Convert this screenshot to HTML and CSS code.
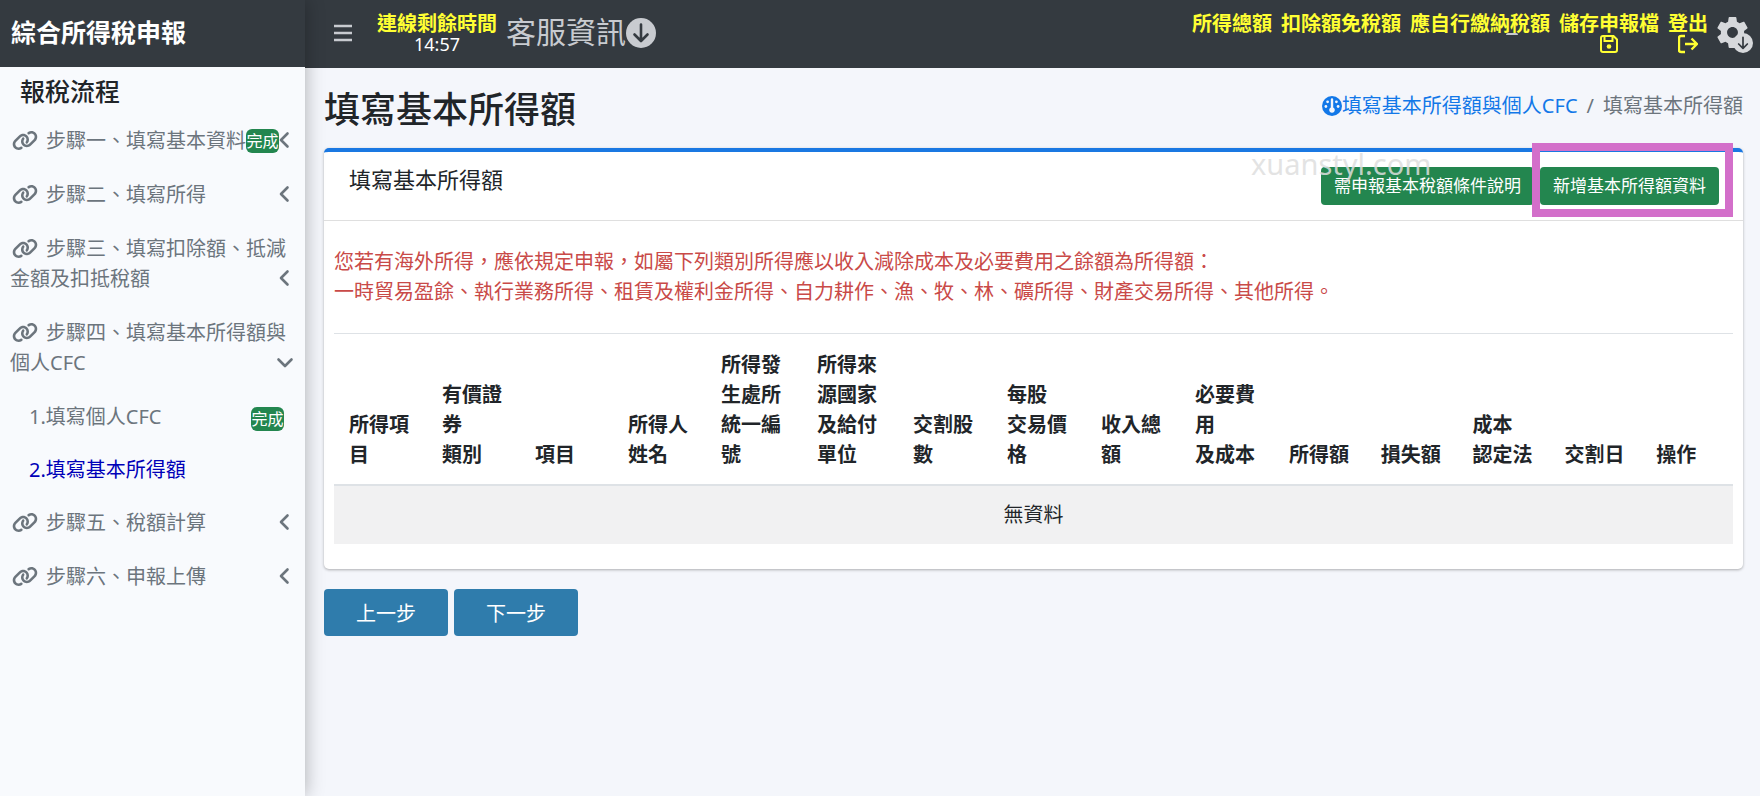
FILE: index.html
```html
<!DOCTYPE html>
<html lang="zh-Hant">
<head>
  <meta charset="UTF-8">
  <meta name="viewport" content="width=device-width, initial-scale=1.0">
  <title>綜合所得稅申報</title>
  <link rel="stylesheet" href="styles.css">
</head>
<body>
  <svg class="sprite" aria-hidden="true">
    <symbol id="i-link" viewBox="0 0 640 512">
      <path d="M579.8 267.7c56.5-56.5 56.5-148 0-204.5c-50-50-128.8-56.5-186.3-15.4l-1.6 1.1c-14.4 10.3-17.7 30.3-7.4 44.6s30.3 17.7 44.6 7.4l1.6-1.1c32.1-22.9 76-19.3 103.8 8.6c31.5 31.5 31.5 82.5 0 114L422.3 334.8c-31.5 31.5-82.5 31.5-114 0c-27.9-27.9-31.5-71.8-8.6-103.8l1.1-1.6c10.3-14.4 6.9-34.4-7.4-44.6s-34.4-6.9-44.6 7.4l-1.1 1.6C206.5 251.2 213 330 263 380c56.5 56.5 148 56.5 204.5 0L579.8 267.7zM60.2 244.3c-56.5 56.5-56.5 148 0 204.5c50 50 128.8 56.5 186.3 15.4l1.6-1.1c14.4-10.3 17.7-30.3 7.4-44.6s-30.3-17.7-44.6-7.4l-1.6 1.1c-32.1 22.9-76 19.3-103.8-8.6C74 372 74 321 105.5 289.5L217.7 177.2c31.5-31.5 82.5-31.5 114 0c27.9 27.9 31.5 71.8 8.6 103.9l-1.1 1.6c-10.3 14.4-6.9 34.4 7.4 44.6s34.4 6.9 44.6-7.4l1.1-1.6C433.5 260.8 427 182 377 132c-56.5-56.5-148-56.5-204.5 0L60.2 244.3z"/>
    </symbol>
    <symbol id="i-left" viewBox="0 0 12 18">
      <path d="M9.5 2.5L3 9l6.5 6.5" fill="none" stroke="currentColor" stroke-width="2.6" stroke-linecap="round" stroke-linejoin="round"/>
    </symbol>
    <symbol id="i-down" viewBox="0 0 18 12">
      <path d="M2.5 2.5L9 9l6.5-6.5" fill="none" stroke="currentColor" stroke-width="2.6" stroke-linecap="round" stroke-linejoin="round"/>
    </symbol>
    <symbol id="i-circle-down" viewBox="0 0 30 30">
      <circle cx="15" cy="15" r="15"/>
      <path d="M15 6.5v16M8.5 16.5l6.5 6.5 6.5-6.5" fill="none" stroke="#343a40" stroke-width="2.6" stroke-linecap="round" stroke-linejoin="round"/>
    </symbol>
    <symbol id="i-gear" viewBox="2 2 20 20">
      <path d="M19.43 12.98c.04-.32.07-.64.07-.98s-.03-.66-.07-.98l2.11-1.65c.19-.15.24-.42.12-.64l-2-3.46c-.12-.22-.39-.3-.61-.22l-2.49 1c-.52-.4-1.08-.73-1.69-.98l-.38-2.65C14.46 2.18 14.25 2 14 2h-4c-.25 0-.46.18-.49.42l-.38 2.65c-.61.25-1.17.59-1.69.98l-2.49-1c-.23-.09-.49 0-.61.22l-2 3.46c-.13.22-.07.49.12.64l2.11 1.65c-.04.32-.07.65-.07.98s.03.66.07.98l-2.11 1.65c-.19.15-.24.42-.12.64l2 3.46c.12.22.39.3.61.22l2.49-1c.52.4 1.08.73 1.69.98l.38 2.65c.03.24.24.42.49.42h4c.25 0 .46-.18.49-.42l.38-2.65c.61-.25 1.17-.59 1.69-.98l2.49 1c.23.09.49 0 .61-.22l2-3.46c.12-.22.07-.49-.12-.64l-2.11-1.65zM12 15.5c-1.93 0-3.5-1.57-3.5-3.5s1.57-3.5 3.5-3.5 3.5 1.57 3.5 3.5-1.57 3.5-3.5 3.5z"/>
    </symbol>
    <symbol id="i-gauge" viewBox="0 0 20 20">
      <circle cx="10" cy="10" r="10"/>
      <g fill="#f4f6fb">
        <path d="M8.8 3.4a1.2 1.2 0 0 1 2.4 0v8a2.8 2.8 0 1 1-2.4 0z"/>
        <circle cx="5.6" cy="5.8" r="1.4"/>
        <circle cx="14.4" cy="5.8" r="1.4"/>
        <circle cx="3.900" cy="10.500" r="1.400"/>
        <circle cx="16.100" cy="10.500" r="1.400"/>
      </g>
    </symbol>
  </svg>

  <div class="wrapper">
    <aside class="sidebar">
      <a class="brand" href="#">綜合所得稅申報</a>
      <h2 class="sidebar-title">報稅流程</h2>
      <nav>
        <ul class="menu">
          <li>
            <a class="menu-link" href="#"><svg class="link-icon"><use href="#i-link"/></svg>步驟一、填寫基本資料<span class="badge">完成</span><svg class="arrow"><use href="#i-left"/></svg></a>
          </li>
          <li>
            <a class="menu-link" href="#"><svg class="link-icon"><use href="#i-link"/></svg>步驟二、填寫所得<svg class="arrow"><use href="#i-left"/></svg></a>
          </li>
          <li>
            <a class="menu-link" href="#"><svg class="link-icon"><use href="#i-link"/></svg>步驟三、填寫扣除額、抵減金額及扣抵稅額<svg class="arrow"><use href="#i-left"/></svg></a>
          </li>
          <li>
            <a class="menu-link" href="#"><svg class="link-icon"><use href="#i-link"/></svg>步驟四、填寫基本所得額與個人CFC<svg class="arrow open"><use href="#i-down"/></svg></a>
            <ul class="submenu">
              <li><a class="submenu-link" href="#">1.填寫個人CFC<span class="badge">完成</span></a></li>
              <li><a class="submenu-link active" href="#">2.填寫基本所得額</a></li>
            </ul>
          </li>
          <li>
            <a class="menu-link" href="#"><svg class="link-icon"><use href="#i-link"/></svg>步驟五、稅額計算<svg class="arrow"><use href="#i-left"/></svg></a>
          </li>
          <li>
            <a class="menu-link" href="#"><svg class="link-icon"><use href="#i-link"/></svg>步驟六、申報上傳<svg class="arrow"><use href="#i-left"/></svg></a>
          </li>
        </ul>
      </nav>
    </aside>

    <div class="main">
      <header class="navbar">
        <button class="toggle" type="button" aria-label="選單">
          <svg viewBox="0 0 18 18"><path d="M0 2h18M0 9h18M0 16h18" stroke="currentColor" stroke-width="2.4"/></svg>
        </button>
        <div class="timer">
          <strong>連線剩餘時間</strong>
          <span>14:57</span>
        </div>
        <a class="service" href="#">客服資訊<svg><use href="#i-circle-down"/></svg></a>
        <div class="nav-right">
          <a class="nav-item" href="#">所得總額</a>
          <a class="nav-item" href="#">扣除額免稅額</a>
          <a class="nav-item" href="#">應自行繳納稅額<i class="bump"></i></a>
          <a class="nav-item" href="#">儲存申報檔
            <svg viewBox="0 0 20 20"><path d="M2 4a2 2 0 0 1 2-2h10.5L18 5.5V16a2 2 0 0 1-2 2H4a2 2 0 0 1-2-2zM5.5 2.5V7h8V2.5" fill="none" stroke="currentColor" stroke-width="2"/><circle cx="10" cy="12.5" r="2.3" fill="currentColor"/></svg>
          </a>
          <a class="nav-item" href="#">登出
            <svg viewBox="0 0 20 20"><path d="M7 2H3a2 2 0 0 0-2 2v12a2 2 0 0 0 2 2h4M7 10h12M13.500 4.500L19 10l-5.500 5.500" fill="none" stroke="currentColor" stroke-width="2.400" stroke-linejoin="round"/></svg>
          </a>
        </div>
        <button class="settings" type="button" aria-label="設定">
          <svg class="gear"><use href="#i-gear"/></svg>
          <svg class="gear-badge"><use href="#i-circle-down"/></svg>
        </button>
      </header>

      <main class="content">
        <div class="content-header">
          <h1>填寫基本所得額</h1>
          <nav class="breadcrumb">
            <a href="#"><svg><use href="#i-gauge"/></svg>填寫基本所得額與個人CFC</a>
            <span class="divider">/</span>
            <span>填寫基本所得額</span>
          </nav>
        </div>

        <section class="card">
          <div class="card-header">
            <h3>填寫基本所得額</h3>
            <div class="card-tools">
              <button class="btn-success" type="button">需申報基本稅額條件說明</button>
              <div class="highlight">
                <button class="btn-success" type="button">新增基本所得額資料</button>
              </div>
              <span class="watermark">xuanstyl.com</span>
            </div>
          </div>
          <div class="card-body">
            <p class="notice">您若有海外所得，應依規定申報，如屬下列類別所得應以收入減除成本及必要費用之餘額為所得額：<br>一時貿易盈餘、執行業務所得、租賃及權利金所得、自力耕作、漁、牧、林、礦所得、財產交易所得、其他所得。</p>
            <table>
              <colgroup>
                <col span="4" class="col-item">
                <col span="2" class="col-source">
                <col span="4" class="col-amount">
                <col span="5">
              </colgroup>
              <thead>
                <tr>
                  <th>所得項目</th>
                  <th>有價證券<br>類別</th>
                  <th>項目</th>
                  <th>所得人姓名</th>
                  <th>所得發生處所統一編號</th>
                  <th>所得來源國家及給付單位</th>
                  <th>交割股數</th>
                  <th>每股<br>交易價格</th>
                  <th>收入總額</th>
                  <th>必要費用<br>及成本</th>
                  <th>所得額</th>
                  <th>損失額</th>
                  <th>成本<br>認定法</th>
                  <th>交割日</th>
                  <th>操作</th>
                </tr>
              </thead>
              <tbody>
                <tr>
                  <td colspan="15">無資料</td>
                </tr>
              </tbody>
            </table>
          </div>
        </section>

        <div class="steps">
          <button class="btn-step" type="button">上一步</button>
          <button class="btn-step" type="button">下一步</button>
        </div>
      </main>
    </div>
  </div>
</body>
</html>
```
FILE: styles.css
```css
* {
  box-sizing: border-box;
}
body {
  margin: 0;
  font-family: "Noto Sans", "Noto Sans CJK TC", sans-serif;
  font-size: 20px;
  line-height: 30px;
  color: #212529;
  background-color: #f4f6fb;
}
a {
  text-decoration: none;
  color: inherit;
}
button {
  font-family: inherit;
  border: none;
  cursor: pointer;
}
h1, h2, h3, p, ul {
  margin: 0;
  padding: 0;
}
ul {
  list-style: none;
}
svg {
  fill: currentColor;
}
.sprite {
  display: none;
}
.wrapper {
  display: flex;
  min-height: 100vh;
}

/* sidebar */
.sidebar {
  position: relative;
  z-index: 1;
  flex: 0 0 305px;
  background-color: #f8fafd;
  box-shadow: 0 0 18px rgba(0, 0, 0, 0.3);
}
.brand {
  display: block;
  height: 67px;
  padding-left: 11px;
  line-height: 64px;
  font-size: 25px;
  font-weight: bold;
  color: #fff;
  background-color: #343a40;
}
.sidebar-title {
  padding: 6px 20px 0;
  font-size: 25px;
  line-height: 36px;
  font-weight: 500;
}
.menu {
  padding-top: 5px;
}
.menu-link,
.submenu-link {
  position: relative;
  display: block;
  padding: 12px 15px 12px 10px;
  color: #6c757d;
}
.link-icon {
  width: 26px;
  height: 21px;
  margin: 0 8px 0 2px;
  vertical-align: -3px;
}
.arrow {
  position: absolute;
  right: 15px;
  bottom: 19px;
  width: 12px;
  height: 18px;
}
.arrow.open {
  right: 11px;
  bottom: 21px;
  width: 18px;
  height: 12px;
}
.badge {
  display: inline-block;
  width: 33px;
  height: 24px;
  margin-top: 3px;
  border-radius: 6px;
  font-size: 16px;
  line-height: 24px;
  text-align: center;
  vertical-align: top;
  color: #fff;
  background-color: #23864f;
}
.submenu-link {
  display: flex;
  justify-content: space-between;
  align-items: center;
  padding: 12px 21px 11px 29px;
}
.submenu-link.active {
  color: #0000b8;
}

/* top bar */
.main {
  flex: 1;
  min-width: 0;
}
.navbar {
  display: flex;
  height: 68px;
  padding: 13px 7px 0 29px;
  background-color: #343a40;
  color: #c8cbd0;
}
.toggle {
  align-self: flex-start;
  padding: 11px 0 0;
  background: none;
  color: inherit;
}
.toggle svg {
  display: block;
  width: 18px;
  height: 18px;
}
.timer {
  display: flex;
  flex-direction: column;
  margin-left: 25px;
  line-height: 20px;
  text-align: center;
}
.timer strong {
  line-height: 22px;
  color: #ff3;
}
.timer span {
  font-size: 18px;
  line-height: 18px;
  color: #fff;
}
.service {
  display: flex;
  align-items: flex-start;
  margin-left: 9px;
  font-size: 30px;
  line-height: 38px;
}
.service svg {
  width: 30px;
  height: 30px;
  margin-top: 5px;
}
.nav-right {
  display: flex;
  gap: 9px;
  margin-left: auto;
}
.nav-item {
  position: relative;
  display: flex;
  flex-direction: column;
  align-items: center;
  line-height: 21px;
  font-weight: bold;
  color: #ff3;
}
.nav-item svg {
  width: 20px;
  height: 20px;
}
.bump {
  position: absolute;
  top: 20px;
  right: 32px;
  width: 12px;
  height: 2px;
  border-radius: 6px 6px 0 0;
  background-color: #c8cbd0;
}
.settings {
  position: relative;
  width: 36px;
  height: 42px;
  margin-left: 9px;
  padding: 0;
  background: none;
  color: #d6d8db;
}
.gear {
  display: block;
  width: 31px;
  height: 31px;
  margin-top: -4px;
}
.gear-badge {
  position: absolute;
  right: 0;
  bottom: 2px;
  width: 20px;
  height: 20px;
}

/* content */
.content {
  padding: 18px 17px 20px 19px;
}
.content-header {
  display: flex;
  justify-content: space-between;
  height: 62px;
}
h1 {
  font-size: 36px;
  line-height: 48px;
  font-weight: 500;
}
.breadcrumb {
  display: flex;
  gap: 9px;
  padding-top: 5px;
  color: #6c757d;
}
.breadcrumb a {
  color: #1278e8;
}
.breadcrumb svg {
  width: 20px;
  height: 20px;
  vertical-align: -3px;
}
.card {
  border-top: 4px solid #1a78e2;
  border-radius: 5px;
  background-color: #fff;
  box-shadow: 0 1px 3px rgba(0, 0, 0, 0.3);
}
.card-header {
  display: flex;
  justify-content: space-between;
  align-items: flex-start;
  padding: 15px 24px 15px 25px;
  border-bottom: 1px solid #dfdfdf;
}
.card-header h3 {
  font-size: 22px;
  line-height: 25px;
  font-weight: normal;
}
.card-tools {
  position: relative;
  display: flex;
  gap: 6px;
}
.btn-success {
  display: block;
  height: 38px;
  padding: 0 13px;
  border-radius: 4px;
  font-size: 17px;
  line-height: 38px;
  color: #fff;
  background-color: #23864f;
}
.highlight {
  position: relative;
}
.highlight::after {
  content: "";
  position: absolute;
  top: -24px;
  right: -14px;
  bottom: -12px;
  left: -8px;
  border: 8px solid #d36fca;
  pointer-events: none;
}
.watermark {
  position: absolute;
  top: -18px;
  left: -70px;
  font-size: 29px;
  color: rgba(222, 222, 222, 0.85);
  pointer-events: none;
}
.card-body {
  padding: 26px 10px 25px;
}
.notice {
  margin-bottom: 26px;
  color: #c94a48;
}
table {
  width: 100%;
  table-layout: fixed;
  border-collapse: collapse;
}
.col-item {
  width: 93px;
}
.col-source {
  width: 96px;
}
.col-amount {
  width: 94px;
}
th {
  padding: 16px 15px 14px;
  border-top: 1px solid #dee2e6;
  border-bottom: 2px solid #dee2e6;
  text-align: left;
  vertical-align: bottom;
}
td {
  padding: 14px 15px;
  text-align: center;
  background-color: #f1f1f2;
}
.steps {
  display: flex;
  gap: 6px;
  margin-top: 20px;
}
.btn-step {
  height: 47px;
  padding: 0 32px;
  border-radius: 4px;
  font-size: 20px;
  color: #fff;
  background-color: #2f7cac;
}
```
